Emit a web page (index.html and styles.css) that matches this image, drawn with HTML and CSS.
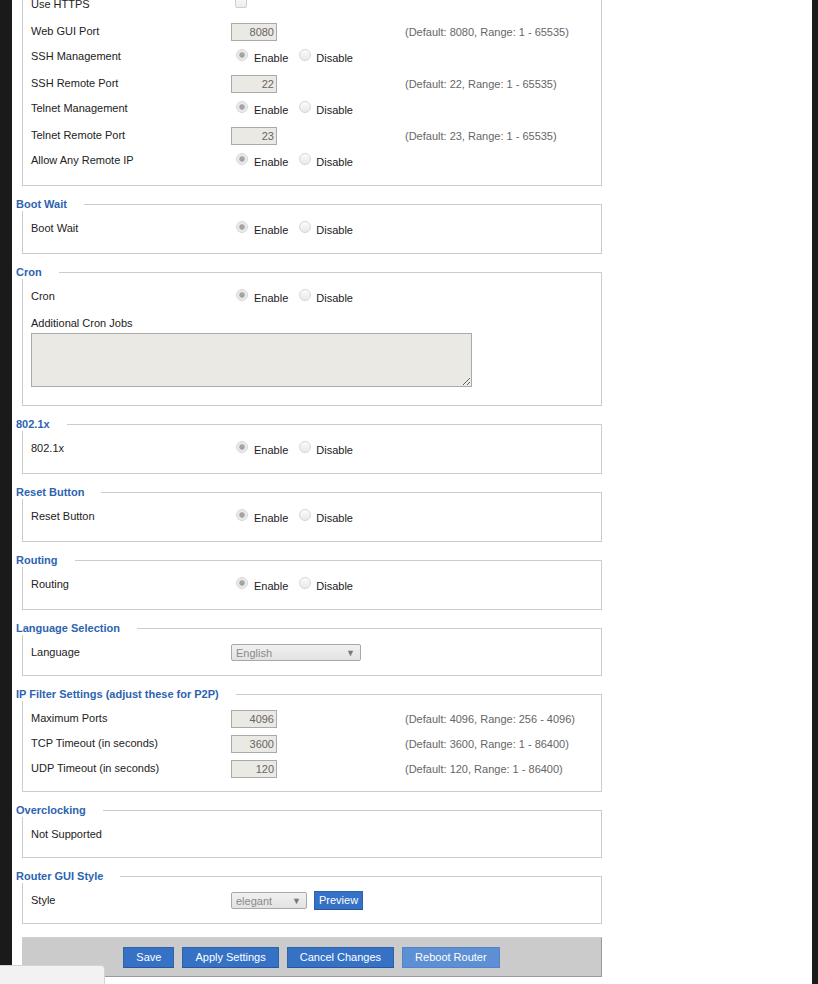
FILE: index.html
```html
<!DOCTYPE html>
<html>
<head>
<meta charset="utf-8">
<title>Management</title>
<link rel="stylesheet" href="styles.css">
</head>
<body>
<div class="page">
  <div class="group group-cut">
    <div class="row row-radio first">
      <div class="label">Use HTTPS</div>
      <div class="ctrl"><input type="checkbox" class="check"></div>
    </div>
    <div class="row">
      <div class="label">Web GUI Port</div>
      <div class="ctrl"><input class="num" type="text" value="8080"></div>
      <div class="hint">(Default: 8080, Range: 1 - 65535)</div>
    </div>
    <div class="row row-radio">
      <div class="label">SSH Management</div>
      <div class="ctrl radios">
        <input type="radio" name="ssh" class="radio" checked><span class="opt">Enable</span>
        <input type="radio" name="ssh" class="radio second"><span class="opt">Disable</span>
      </div>
    </div>
    <div class="row">
      <div class="label">SSH Remote Port</div>
      <div class="ctrl"><input class="num" type="text" value="22"></div>
      <div class="hint">(Default: 22, Range: 1 - 65535)</div>
    </div>
    <div class="row row-radio">
      <div class="label">Telnet Management</div>
      <div class="ctrl radios">
        <input type="radio" name="tel" class="radio" checked><span class="opt">Enable</span>
        <input type="radio" name="tel" class="radio second"><span class="opt">Disable</span>
      </div>
    </div>
    <div class="row">
      <div class="label">Telnet Remote Port</div>
      <div class="ctrl"><input class="num" type="text" value="23"></div>
      <div class="hint">(Default: 23, Range: 1 - 65535)</div>
    </div>
    <div class="row row-radio">
      <div class="label">Allow Any Remote IP</div>
      <div class="ctrl radios">
        <input type="radio" name="any" class="radio" checked><span class="opt">Enable</span>
        <input type="radio" name="any" class="radio second"><span class="opt">Disable</span>
      </div>
    </div>
  </div>

  <fieldset class="group">
    <legend>Boot Wait</legend>
    <div class="row row-radio">
      <div class="label">Boot Wait</div>
      <div class="ctrl radios">
        <input type="radio" name="bw" class="radio" checked><span class="opt">Enable</span>
        <input type="radio" name="bw" class="radio second"><span class="opt">Disable</span>
      </div>
    </div>
  </fieldset>

  <fieldset class="group">
    <legend>Cron</legend>
    <div class="row row-radio">
      <div class="label">Cron</div>
      <div class="ctrl radios">
        <input type="radio" name="cron" class="radio" checked><span class="opt">Enable</span>
        <input type="radio" name="cron" class="radio second"><span class="opt">Disable</span>
      </div>
    </div>
    <div class="block-label">Additional Cron Jobs</div>
    <textarea class="jobs"></textarea>
  </fieldset>

  <fieldset class="group">
    <legend>802.1x</legend>
    <div class="row row-radio">
      <div class="label">802.1x</div>
      <div class="ctrl radios">
        <input type="radio" name="dot" class="radio" checked><span class="opt">Enable</span>
        <input type="radio" name="dot" class="radio second"><span class="opt">Disable</span>
      </div>
    </div>
  </fieldset>

  <fieldset class="group">
    <legend>Reset Button</legend>
    <div class="row row-radio">
      <div class="label">Reset Button</div>
      <div class="ctrl radios">
        <input type="radio" name="rst" class="radio" checked><span class="opt">Enable</span>
        <input type="radio" name="rst" class="radio second"><span class="opt">Disable</span>
      </div>
    </div>
  </fieldset>

  <fieldset class="group">
    <legend>Routing</legend>
    <div class="row row-radio">
      <div class="label">Routing</div>
      <div class="ctrl radios">
        <input type="radio" name="rt" class="radio" checked><span class="opt">Enable</span>
        <input type="radio" name="rt" class="radio second"><span class="opt">Disable</span>
      </div>
    </div>
  </fieldset>

  <fieldset class="group">
    <legend>Language Selection</legend>
    <div class="row">
      <div class="label">Language</div>
      <div class="ctrl"><div class="select select-lang"><span>English</span><span class="arrow">&#9660;</span></div></div>
    </div>
  </fieldset>

  <fieldset class="group">
    <legend>IP Filter Settings (adjust these for P2P)</legend>
    <div class="row">
      <div class="label">Maximum Ports</div>
      <div class="ctrl"><input class="num" type="text" value="4096"></div>
      <div class="hint">(Default: 4096, Range: 256 - 4096)</div>
    </div>
    <div class="row">
      <div class="label">TCP Timeout (in seconds)</div>
      <div class="ctrl"><input class="num" type="text" value="3600"></div>
      <div class="hint">(Default: 3600, Range: 1 - 86400)</div>
    </div>
    <div class="row">
      <div class="label">UDP Timeout (in seconds)</div>
      <div class="ctrl"><input class="num" type="text" value="120"></div>
      <div class="hint">(Default: 120, Range: 1 - 86400)</div>
    </div>
  </fieldset>

  <fieldset class="group">
    <legend>Overclocking</legend>
    <div class="row">
      <div class="label">Not Supported</div>
    </div>
  </fieldset>

  <fieldset class="group">
    <legend>Router GUI Style</legend>
    <div class="row">
      <div class="label">Style</div>
      <div class="ctrl styles">
        <div class="select select-style"><span>elegant</span><span class="arrow">&#9660;</span></div>
        <button class="btn btn-small">Preview</button>
      </div>
    </div>
  </fieldset>

  <div class="bar">
    <button class="btn">Save</button>
    <button class="btn">Apply Settings</button>
    <button class="btn">Cancel Changes</button>
    <button class="btn btn-light">Reboot Router</button>
  </div>
</div>
<div class="status"></div>
</body>
</html>
```
FILE: styles.css
```css
html, body {
  margin: 0;
  padding: 0;
  height: 100%;
  overflow: hidden;
}
body {
  background: #1a1a1a;
  font-family: "Liberation Sans", Arial, sans-serif;
  font-size: 11px;
  color: #222;
}
.page {
  margin-left: 12px;
  width: 800px;
  height: 984px;
  background: #fff;
  overflow: hidden;
}
.group {
  box-sizing: border-box;
  width: 580px;
  margin: 12px 0 0 10px;
  padding: 5px 0 10px 0;
  border: 1px solid #cccccc;
  min-inline-size: 0;
}
.group-cut {
  margin-top: 0;
  border-top: none;
  padding-top: 0;
}
legend {
  margin-left: -7px;
  padding: 0 17px 0 0;
  font-weight: bold;
  color: #2d63b0;
  line-height: 13px;
  font-size: 11px;
}
.row {
  display: flex;
  align-items: center;
  height: 25px;
  padding-left: 8px;
}
.row-radio {
  height: 27px;
  align-items: flex-start;
}
.row.first {
  margin-top: -8px;
}
.label {
  width: 200px;
  flex: none;
  line-height: 25px;
}
.ctrl {
  width: 174px;
  flex: none;
  display: flex;
  align-items: center;
}
.hint {
  color: #666;
}
.num {
  box-sizing: border-box;
  width: 46px;
  height: 18px;
  margin: 0;
  padding: 0 2px 0 0;
  border: 1px solid #aaaaaa;
  background: #ebe9e4;
  color: #666;
  text-align: right;
  font-family: "Liberation Sans", Arial, sans-serif;
  font-size: 11px;
}
.radios {
  align-items: flex-start;
}
.radio {
  appearance: none;
  -webkit-appearance: none;
  box-sizing: border-box;
  width: 12px;
  height: 12px;
  margin: 5px 6px 0 5px;
  border-radius: 50%;
  border: 1px solid #d6d6d6;
  background: linear-gradient(#fbfbfb, #e9e9e9);
  flex: none;
}
.radio:checked {
  background: radial-gradient(circle, #a3a3a3 0, #a3a3a3 2.2px, #e8e8e8 3.2px, #f2f2f2 100%);
}
.radio.second {
  margin-left: 11px;
  margin-right: 5px;
}
.opt {
  margin-top: 7px;
  line-height: 14px;
}
.check {
  appearance: none;
  -webkit-appearance: none;
  box-sizing: border-box;
  width: 12px;
  height: 12px;
  margin: 4px 0 0 4px;
  border: 1px solid #cfcfcf;
  border-radius: 2px;
  background: linear-gradient(#fafafa, #ececec);
  align-self: flex-start;
}
.block-label {
  padding-left: 8px;
  margin-top: 5px;
  line-height: 14px;
}
.jobs {
  display: block;
  box-sizing: border-box;
  width: 441px;
  height: 54px;
  margin: 3px 0 8px 8px;
  border: 1px solid #aaaaaa;
  background: #ebe9e4;
  padding: 2px;
}
.select {
  box-sizing: border-box;
  height: 17px;
  display: flex;
  align-items: center;
  justify-content: space-between;
  padding: 0 5px 0 4px;
  border: 1px solid #a8a8a8;
  border-radius: 2px;
  background: linear-gradient(#f1f1f1, #e2e2e2);
  color: #8a8a8a;
}
.select-lang {
  width: 130px;
}
.select-style {
  width: 76px;
}
.arrow {
  font-size: 9px;
  color: #777;
}
.styles {
  width: auto;
}
.btn {
  box-sizing: border-box;
  height: 21px;
  margin: 0;
  padding: 0 12px;
  border: 1px solid #2f62a8;
  border-bottom-color: #2a5696;
  background: #3572c6;
  color: #fff;
  font-family: "Liberation Sans", Arial, sans-serif;
  font-size: 11px;
  line-height: 19px;
}
.btn-small {
  height: 19px;
  line-height: 17px;
  padding: 0 4px;
  margin-left: 7px;
}
.btn-light {
  background: #5c8fd4;
  border-color: #5484c4;
}
.bar {
  box-sizing: border-box;
  width: 580px;
  margin: 13px 0 0 10px;
  padding: 9px 0 8px;
  display: flex;
  justify-content: center;
  gap: 8px;
  background: #cbcbcb;
  border-top: 1px solid #d2d2d2;
  border-right: 1px solid #9a9a9a;
  border-bottom: 1px solid #9a9a9a;
}
.status {
  position: fixed;
  left: 0;
  bottom: 0;
  width: 105px;
  height: 19px;
  box-sizing: border-box;
  background: #f2f2f2;
  border-top: 1px solid #d4d4d4;
  border-right: 1px solid #d4d4d4;
  border-top-right-radius: 4px;
}
```
